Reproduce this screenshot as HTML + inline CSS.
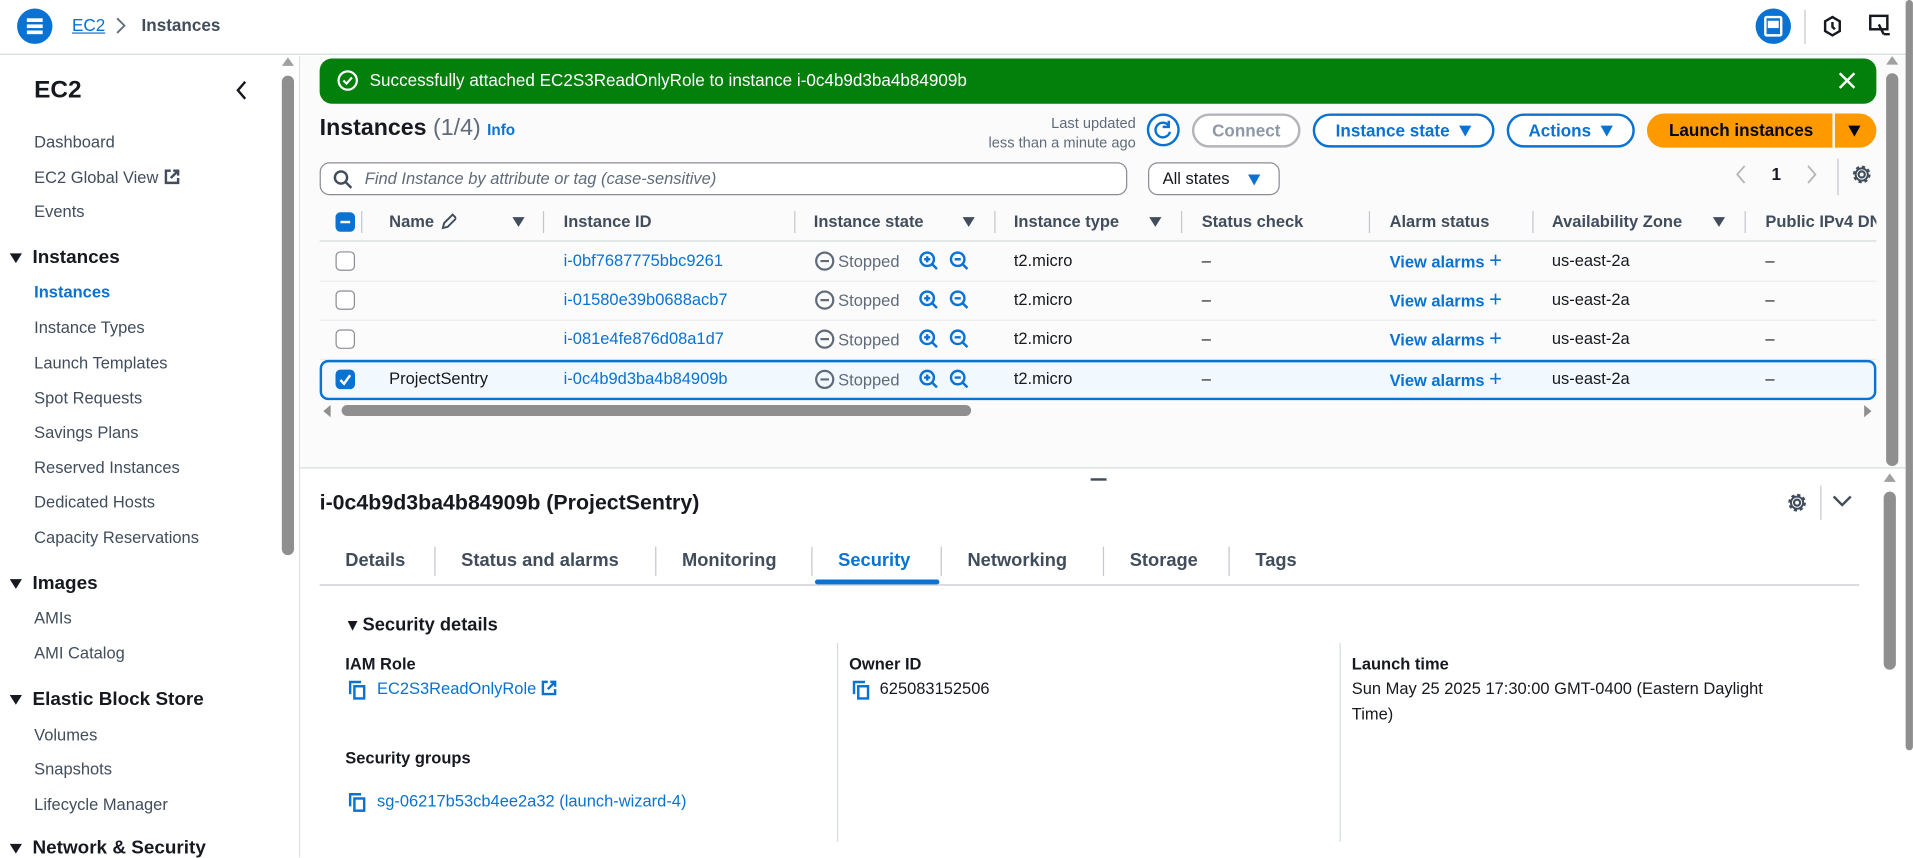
<!DOCTYPE html>
<html><head><meta charset="utf-8"><style>
*{margin:0;padding:0;box-sizing:border-box}
html,body{width:1913px;height:858px;overflow:hidden;background:#fff}
#w{position:absolute;left:0;top:0;width:1568px;height:703px;transform:scale(1.22);transform-origin:0 0;font-family:"Liberation Sans",sans-serif;color:#16191f;font-size:13.5px;background:#fff;overflow:hidden}
.a{position:absolute}
.t{position:absolute;white-space:nowrap;transform:translateY(-50%);line-height:1.2}
.b{font-weight:bold}
.bl{color:#0972d3}
.g{color:#5f6b7a}
.sep{position:absolute;width:1px;background:#c6c6cd}
.cb{position:absolute;width:16px;height:16px;border:1.5px solid #8c8c94;border-radius:4px;background:#fff}
.btn{position:absolute;height:28px;border:2px solid #0972d3;border-radius:16px;color:#0972d3;font-weight:bold;font-size:14px;display:flex;align-items:center;justify-content:center;gap:8px;background:#fff}
.tri{display:inline-block;width:0;height:0;border-left:5px solid transparent;border-right:5px solid transparent;border-top:9px solid currentColor}
.tri2{display:inline-block;width:0;height:0;border-left:5px solid transparent;border-right:5px solid transparent;border-top:8px solid #16191f;vertical-align:middle}
.hdr{font-weight:bold;color:#414d5c}
</style></head><body><div id="w">

<!-- top bar -->
<div class="a" style="left:0;top:0;width:1568px;height:45px;background:#fff;border-bottom:1px solid #d5dbdb"></div>
<div class="a" style="left:14px;top:7px;width:29px;height:29px;border-radius:50%;background:#0972d3"></div>
<div class="a" style="left:22px;top:15px;width:13px;height:2.5px;background:#fff;box-shadow:0 5px 0 #fff,0 10px 0 #fff"></div>
<div class="t bl" style="left:59px;top:21px;font-size:14px;text-decoration:underline">EC2</div>
<svg class="a" style="left:94px;top:14px" width="10" height="14"><path d="M2 1l6 6-6 6" fill="none" stroke="#5f6b7a" stroke-width="1.5"/></svg>
<div class="t b" style="left:116px;top:21px;font-size:14px;color:#414d5c">Instances</div>
<div class="a" style="left:1439px;top:7px;width:29px;height:29px;border-radius:50%;background:#0972d3"></div>
<div class="a" style="left:1446px;top:13px;width:15px;height:17px;border:2px solid #fff;border-radius:2px"></div>
<div class="a" style="left:1449px;top:17px;width:9px;height:6px;background:#fff"></div>
<div class="sep" style="left:1479px;top:8px;height:28px"></div>
<svg class="a" style="left:1493px;top:12px" width="18" height="20"><path d="M9 2l6 3.5v8L9 17l-6-3.5v-8z" fill="none" stroke="#16191f" stroke-width="2"/><path d="M9 6v4l2 2" stroke="#16191f" stroke-width="2" fill="none"/></svg>
<svg class="a" style="left:1531px;top:11px" width="20" height="20"><rect x="2" y="2" width="14" height="11" fill="none" stroke="#16191f" stroke-width="2"/><path d="M9 9l4 8M13 17h5" stroke="#16191f" stroke-width="2"/></svg>

<!-- sidebar -->
<div class="t b" style="left:28px;top:74px;font-size:20px">EC2</div>
<svg class="a" style="left:192px;top:66px" width="12" height="16"><path d="M9 1L3 8l6 7" fill="none" stroke="#16191f" stroke-width="2"/></svg>
<div class="t" style="left:28px;top:117px;color:#414d5c">Dashboard</div>
<div class="t" style="left:28px;top:146px;color:#414d5c">EC2 Global View <svg width="14" height="14" style="vertical-align:-2px"><path d="M6 2H2v10h10V8M8 2h4v4M12 2L6 8" fill="none" stroke="#414d5c" stroke-width="2"/></svg></div>
<div class="t" style="left:28px;top:174px;color:#414d5c">Events</div>
<div class="t b" style="left:8px;top:212px;font-size:15.5px"><span class="tri2"></span>&nbsp; Instances</div>
<div class="t b bl" style="left:28px;top:240px">Instances</div>
<div class="t" style="left:28px;top:269px;color:#414d5c">Instance Types</div>
<div class="t" style="left:28px;top:298px;color:#414d5c">Launch Templates</div>
<div class="t" style="left:28px;top:327px;color:#414d5c">Spot Requests</div>
<div class="t" style="left:28px;top:355px;color:#414d5c">Savings Plans</div>
<div class="t" style="left:28px;top:384px;color:#414d5c">Reserved Instances</div>
<div class="t" style="left:28px;top:412px;color:#414d5c">Dedicated Hosts</div>
<div class="t" style="left:28px;top:441px;color:#414d5c">Capacity Reservations</div>
<div class="t b" style="left:8px;top:479px;font-size:15.5px"><span class="tri2"></span>&nbsp; Images</div>
<div class="t" style="left:28px;top:507px;color:#414d5c">AMIs</div>
<div class="t" style="left:28px;top:536px;color:#414d5c">AMI Catalog</div>
<div class="t b" style="left:8px;top:574px;font-size:15.5px"><span class="tri2"></span>&nbsp; Elastic Block Store</div>
<div class="t" style="left:28px;top:603px;color:#414d5c">Volumes</div>
<div class="t" style="left:28px;top:631px;color:#414d5c">Snapshots</div>
<div class="t" style="left:28px;top:660px;color:#414d5c">Lifecycle Manager</div>
<div class="t b" style="left:8px;top:696px;font-size:15.5px"><span class="tri2"></span>&nbsp; Network &amp; Security</div>
<!-- sidebar scrollbar -->
<div class="a" style="left:229px;top:46px;width:14px;height:657px;background:#fff"></div>
<div class="a" style="left:231px;top:47px;width:0;height:0;border-left:5px solid transparent;border-right:5px solid transparent;border-bottom:7px solid #a0a0a0"></div>
<div class="a" style="left:231px;top:62px;width:10px;height:393px;background:#8f8f8f;border-radius:5px"></div>
<div class="a" style="left:245px;top:46px;width:1px;height:657px;background:#e0e0e0"></div>

<!-- upper main -->
<div class="a" style="left:246px;top:46px;width:1316px;height:337px;background:#fbfbfb"></div>
<div class="a" style="left:262px;top:48px;width:1276px;height:37px;background:#037f0c;border-radius:10px"></div>
<svg class="a" style="left:276px;top:57px" width="18" height="18"><circle cx="9" cy="9" r="7.5" fill="none" stroke="#fff" stroke-width="1.8"/><path d="M5.5 9l2.5 2.5 4.5-5" fill="none" stroke="#fff" stroke-width="1.8"/></svg>
<div class="t" style="left:303px;top:66px;color:#fff;font-size:14px">Successfully attached EC2S3ReadOnlyRole to instance i-0c4b9d3ba4b84909b</div>
<svg class="a" style="left:1507px;top:59px" width="14" height="14"><path d="M1 1l12 12M13 1L1 13" stroke="#fff" stroke-width="2"/></svg>

<div class="t" style="left:262px;top:106px;font-size:19px"><b>Instances</b> <span class="g">(1/4)</span> <span class="bl b" style="font-size:12.5px">Info</span></div>
<div class="t g" style="right:637px;top:101px;font-size:12px;text-align:right">Last updated</div>
<div class="t g" style="right:637px;top:117px;font-size:12px;text-align:right">less than a minute ago</div>
<div class="a" style="left:940px;top:93px;width:27px;height:27px;border:2px solid #0972d3;border-radius:50%;background:#fff"></div>
<svg class="a" style="left:945px;top:98px" width="17" height="17"><path d="M13 5a6 6 0 1 0 1 5" fill="none" stroke="#0972d3" stroke-width="2"/><path d="M13 1v5h-5" fill="none" stroke="#0972d3" stroke-width="2"/></svg>
<div class="btn" style="left:977px;top:93px;width:89px;border-color:#b4b4bb;color:#8d99a8">Connect</div>
<div class="btn" style="left:1076px;top:93px;width:149px">Instance state <span class="tri"></span></div>
<div class="btn" style="left:1235px;top:93px;width:105px">Actions <span class="tri"></span></div>
<div class="a" style="left:1350px;top:93px;width:188px;height:28px;border-radius:16px;background:#ff9900"></div>
<div class="t b" style="left:1368px;top:107px;font-size:14px;color:#000716">Launch instances</div>
<div class="a" style="left:1502px;top:93px;width:2px;height:28px;background:#fbfbfb"></div>
<div class="a" style="left:1515px;top:103px;width:0;height:0;border-left:5px solid transparent;border-right:5px solid transparent;border-top:9px solid #000716"></div>

<div class="a" style="left:262px;top:133px;width:662px;height:27px;border:1px solid #8c8c94;border-radius:8px;background:#fff"></div>
<svg class="a" style="left:273px;top:139px" width="16" height="16"><circle cx="6.5" cy="6.5" r="5" fill="none" stroke="#414d5c" stroke-width="2"/><path d="M10 10l5 5" stroke="#414d5c" stroke-width="2"/></svg>
<div class="t g" style="left:299px;top:147px;font-style:italic">Find Instance by attribute or tag (case-sensitive)</div>
<div class="a" style="left:941px;top:133px;width:108px;height:27px;border:1px solid #8c8c94;border-radius:8px;background:#fff"></div>
<div class="t" style="left:953px;top:147px">All states</div>
<div class="a" style="left:1023px;top:143px;width:0;height:0;border-left:5px solid transparent;border-right:5px solid transparent;border-top:9px solid #0972d3"></div>
<svg class="a" style="left:1422px;top:135px" width="10" height="16"><path d="M8 1L2 8l6 7" fill="none" stroke="#b4b4bb" stroke-width="1.5"/></svg>
<div class="t b" style="left:1452px;top:143px;font-size:14px">1</div>
<svg class="a" style="left:1480px;top:135px" width="10" height="16"><path d="M2 1l6 7-6 7" fill="none" stroke="#b4b4bb" stroke-width="1.5"/></svg>
<div class="sep" style="left:1506px;top:130px;height:30px"></div>
<svg class="a" style="left:1517px;top:134px" width="18" height="18"><circle cx="9" cy="9" r="2.5" fill="none" stroke="#414d5c" stroke-width="1.8"/><circle cx="9" cy="9" r="6" fill="none" stroke="#414d5c" stroke-width="2.5" stroke-dasharray="2.5 2.2"/><circle cx="9" cy="9" r="5" fill="none" stroke="#414d5c" stroke-width="1.6"/></svg>

<!-- table header -->
<div class="a" style="left:275px;top:174px;width:16px;height:16px;background:#0972d3;border-radius:4px"></div>
<div class="a" style="left:279px;top:181px;width:8px;height:2px;background:#fff"></div>
<div class="sep" style="left:296px;top:173px;height:18px"></div>
<div class="t hdr" style="left:319px;top:182px">Name <svg width="14" height="14" style="vertical-align:-2px"><path d="M3 13l1-4 7-7 3 3-7 7z" fill="none" stroke="#414d5c" stroke-width="1.6"/></svg></div>
<div class="a" style="left:420px;top:178px;width:0;height:0;border-left:5px solid transparent;border-right:5px solid transparent;border-top:8px solid #414d5c"></div>
<div class="sep" style="left:445px;top:173px;height:18px"></div>
<div class="t hdr" style="left:462px;top:182px">Instance ID</div>
<div class="sep" style="left:651px;top:173px;height:18px"></div>
<div class="t hdr" style="left:667px;top:182px">Instance state</div>
<div class="a" style="left:789px;top:178px;width:0;height:0;border-left:5px solid transparent;border-right:5px solid transparent;border-top:8px solid #414d5c"></div>
<div class="sep" style="left:815px;top:173px;height:18px"></div>
<div class="t hdr" style="left:831px;top:182px">Instance type</div>
<div class="a" style="left:942px;top:178px;width:0;height:0;border-left:5px solid transparent;border-right:5px solid transparent;border-top:8px solid #414d5c"></div>
<div class="sep" style="left:968px;top:173px;height:18px"></div>
<div class="t hdr" style="left:985px;top:182px">Status check</div>
<div class="sep" style="left:1122px;top:173px;height:18px"></div>
<div class="t hdr" style="left:1139px;top:182px">Alarm status</div>
<div class="sep" style="left:1256px;top:173px;height:18px"></div>
<div class="t hdr" style="left:1272px;top:182px">Availability Zone</div>
<div class="a" style="left:1404px;top:178px;width:0;height:0;border-left:5px solid transparent;border-right:5px solid transparent;border-top:8px solid #414d5c"></div>
<div class="sep" style="left:1430px;top:173px;height:18px"></div>
<div class="t hdr" style="left:1447px;top:182px;width:91px;overflow:hidden;transform:translateY(-50%)">Public IPv4 DNS</div>
<div class="a" style="left:262px;top:197px;width:1276px;height:1px;background:#d5dbdb"></div>
<div class="a" style="left:262px;top:230px;width:1276px;height:1px;background:#e9ebed"></div>
<div class="a" style="left:262px;top:262px;width:1276px;height:1px;background:#e9ebed"></div>
<div class="a" style="left:262px;top:294px;width:1276px;height:1px;background:#e9ebed"></div>
<div class="a" style="left:262px;top:295px;width:1276px;height:33px;border:2px solid #0972d3;border-radius:7px;background:#f1f8fe"></div>

<!-- rows -->
<div class="cb" style="left:275px;top:206px"></div>
<div class="cb" style="left:275px;top:238px"></div>
<div class="cb" style="left:275px;top:270px"></div>
<div class="a" style="left:275px;top:303px;width:16px;height:16px;background:#0972d3;border-radius:4px"></div>
<svg class="a" style="left:277px;top:305px" width="12" height="12"><path d="M2 6.5l3 3 5-7" fill="none" stroke="#fff" stroke-width="2"/></svg>
<div class="t" style="left:319px;top:311px">ProjectSentry</div>

<div class="t bl" style="left:462px;top:214px">i-0bf7687775bbc9261</div>
<div class="t bl" style="left:462px;top:246px">i-01580e39b0688acb7</div>
<div class="t bl" style="left:462px;top:278px">i-081e4fe876d08a1d7</div>
<div class="t bl" style="left:462px;top:311px">i-0c4b9d3ba4b84909b</div>

<!-- state cells (repeated) -->
<div class="a" style="left:667px;top:205px;width:160px;height:120px">
 <div class="a" style="top:0"><svg width="130" height="18"><circle cx="9" cy="9" r="7" fill="none" stroke="#5f6b7a" stroke-width="1.8"/><path d="M5.5 9h7" stroke="#5f6b7a" stroke-width="1.8"/><text x="20" y="14" font-family="Liberation Sans" font-size="13.5" fill="#5f6b7a">Stopped</text><circle cx="93" cy="7.5" r="5.5" fill="none" stroke="#0972d3" stroke-width="2"/><path d="M97 11.5l4 4M90.5 7.5h5M93 5v5" stroke="#0972d3" stroke-width="2"/><circle cx="118" cy="7.5" r="5.5" fill="none" stroke="#0972d3" stroke-width="2"/><path d="M122 11.5l4 4M115.5 7.5h5" stroke="#0972d3" stroke-width="2"/></svg></div>
 <div class="a" style="top:32px"><svg width="130" height="18"><circle cx="9" cy="9" r="7" fill="none" stroke="#5f6b7a" stroke-width="1.8"/><path d="M5.5 9h7" stroke="#5f6b7a" stroke-width="1.8"/><text x="20" y="14" font-family="Liberation Sans" font-size="13.5" fill="#5f6b7a">Stopped</text><circle cx="93" cy="7.5" r="5.5" fill="none" stroke="#0972d3" stroke-width="2"/><path d="M97 11.5l4 4M90.5 7.5h5M93 5v5" stroke="#0972d3" stroke-width="2"/><circle cx="118" cy="7.5" r="5.5" fill="none" stroke="#0972d3" stroke-width="2"/><path d="M122 11.5l4 4M115.5 7.5h5" stroke="#0972d3" stroke-width="2"/></svg></div>
 <div class="a" style="top:64px"><svg width="130" height="18"><circle cx="9" cy="9" r="7" fill="none" stroke="#5f6b7a" stroke-width="1.8"/><path d="M5.5 9h7" stroke="#5f6b7a" stroke-width="1.8"/><text x="20" y="14" font-family="Liberation Sans" font-size="13.5" fill="#5f6b7a">Stopped</text><circle cx="93" cy="7.5" r="5.5" fill="none" stroke="#0972d3" stroke-width="2"/><path d="M97 11.5l4 4M90.5 7.5h5M93 5v5" stroke="#0972d3" stroke-width="2"/><circle cx="118" cy="7.5" r="5.5" fill="none" stroke="#0972d3" stroke-width="2"/><path d="M122 11.5l4 4M115.5 7.5h5" stroke="#0972d3" stroke-width="2"/></svg></div>
 <div class="a" style="top:97px"><svg width="130" height="18"><circle cx="9" cy="9" r="7" fill="none" stroke="#5f6b7a" stroke-width="1.8"/><path d="M5.5 9h7" stroke="#5f6b7a" stroke-width="1.8"/><text x="20" y="14" font-family="Liberation Sans" font-size="13.5" fill="#5f6b7a">Stopped</text><circle cx="93" cy="7.5" r="5.5" fill="none" stroke="#0972d3" stroke-width="2"/><path d="M97 11.5l4 4M90.5 7.5h5M93 5v5" stroke="#0972d3" stroke-width="2"/><circle cx="118" cy="7.5" r="5.5" fill="none" stroke="#0972d3" stroke-width="2"/><path d="M122 11.5l4 4M115.5 7.5h5" stroke="#0972d3" stroke-width="2"/></svg></div>
</div>

<div class="t" style="left:831px;top:214px">t2.micro</div>
<div class="t" style="left:831px;top:246px">t2.micro</div>
<div class="t" style="left:831px;top:278px">t2.micro</div>
<div class="t" style="left:831px;top:311px">t2.micro</div>
<div class="t" style="left:985px;top:214px">–</div>
<div class="t" style="left:985px;top:246px">–</div>
<div class="t" style="left:985px;top:278px">–</div>
<div class="t" style="left:985px;top:311px">–</div>
<div class="t bl b" style="left:1139px;top:214px">View alarms <span style="font-size:18px;font-weight:normal">+</span></div>
<div class="t bl b" style="left:1139px;top:246px">View alarms <span style="font-size:18px;font-weight:normal">+</span></div>
<div class="t bl b" style="left:1139px;top:278px">View alarms <span style="font-size:18px;font-weight:normal">+</span></div>
<div class="t bl b" style="left:1139px;top:311px">View alarms <span style="font-size:18px;font-weight:normal">+</span></div>
<div class="t" style="left:1272px;top:214px">us-east-2a</div>
<div class="t" style="left:1272px;top:246px">us-east-2a</div>
<div class="t" style="left:1272px;top:278px">us-east-2a</div>
<div class="t" style="left:1272px;top:311px">us-east-2a</div>
<div class="t" style="left:1447px;top:214px">–</div>
<div class="t" style="left:1447px;top:246px">–</div>
<div class="t" style="left:1447px;top:278px">–</div>
<div class="t" style="left:1447px;top:311px">–</div>

<!-- h scrollbar -->
<div class="a" style="left:265px;top:332px;width:0;height:0;border-top:5px solid transparent;border-bottom:5px solid transparent;border-right:6px solid #8f8f8f"></div>
<div class="a" style="left:280px;top:332px;width:516px;height:9px;background:#8f8f8f;border-radius:5px"></div>
<div class="a" style="left:1528px;top:332px;width:0;height:0;border-top:5px solid transparent;border-bottom:5px solid transparent;border-left:6px solid #8f8f8f"></div>
<!-- right scroll upper -->
<div class="a" style="left:1546px;top:46px;width:0;height:0;border-left:5px solid transparent;border-right:5px solid transparent;border-bottom:7px solid #a0a0a0"></div>
<div class="a" style="left:1546px;top:60px;width:10px;height:322px;background:#8f8f8f;border-radius:5px"></div>

<!-- divider -->
<div class="a" style="left:246px;top:383px;width:1316px;height:1px;background:#d5dbdb"></div>
<div class="a" style="left:894px;top:392px;width:13px;height:2px;background:#414d5c"></div>

<!-- lower panel -->
<div class="t b" style="left:262px;top:412px;font-size:17.5px">i-0c4b9d3ba4b84909b (ProjectSentry)</div>
<svg class="a" style="left:1464px;top:403px" width="18" height="18"><circle cx="9" cy="9" r="2.5" fill="none" stroke="#414d5c" stroke-width="1.8"/><circle cx="9" cy="9" r="6" fill="none" stroke="#414d5c" stroke-width="2.5" stroke-dasharray="2.5 2.2"/><circle cx="9" cy="9" r="5" fill="none" stroke="#414d5c" stroke-width="1.6"/></svg>
<div class="sep" style="left:1492px;top:398px;height:28px"></div>
<svg class="a" style="left:1502px;top:406px" width="16" height="10"><path d="M1 1l7 7 7-7" fill="none" stroke="#414d5c" stroke-width="2"/></svg>
<div class="a" style="left:1544px;top:388px;width:0;height:0;border-left:5px solid transparent;border-right:5px solid transparent;border-bottom:7px solid #a0a0a0"></div>
<div class="a" style="left:1544px;top:403px;width:10px;height:146px;background:#8f8f8f;border-radius:5px"></div>
<div class="a" style="left:1562px;top:0;width:6px;height:615px;background:#8f8f8f;border-radius:3px"></div>

<div class="t b" style="left:283px;top:460px;font-size:15px;color:#414d5c">Details</div>
<div class="sep" style="left:356px;top:448px;height:24px"></div>
<div class="t b" style="left:378px;top:460px;font-size:15px;color:#414d5c">Status and alarms</div>
<div class="sep" style="left:537px;top:448px;height:24px"></div>
<div class="t b" style="left:559px;top:460px;font-size:15px;color:#414d5c">Monitoring</div>
<div class="sep" style="left:665px;top:448px;height:24px"></div>
<div class="t b bl" style="left:687px;top:460px;font-size:15px">Security</div>
<div class="sep" style="left:771px;top:448px;height:24px"></div>
<div class="t b" style="left:793px;top:460px;font-size:15px;color:#414d5c">Networking</div>
<div class="sep" style="left:904px;top:448px;height:24px"></div>
<div class="t b" style="left:926px;top:460px;font-size:15px;color:#414d5c">Storage</div>
<div class="sep" style="left:1007px;top:448px;height:24px"></div>
<div class="t b" style="left:1029px;top:460px;font-size:15px;color:#414d5c">Tags</div>
<div class="a" style="left:262px;top:479px;width:1262px;height:1px;background:#c6c6cd"></div>
<div class="a" style="left:668px;top:475px;width:102px;height:4px;background:#0972d3;border-radius:2px"></div>

<div class="t b" style="left:285px;top:513px;font-size:15px"><span class="tri2" style="border-left-width:4px;border-right-width:4px;border-top-width:8px"></span>&nbsp;Security details</div>
<div class="sep" style="left:686px;top:527px;height:163px;background:#d5dbdb"></div>
<div class="sep" style="left:1098px;top:527px;height:163px;background:#d5dbdb"></div>

<div class="t b" style="left:283px;top:545px">IAM Role</div>
<svg class="a" style="left:285px;top:557px" width="16" height="17"><path d="M2 12V2h9" fill="none" stroke="#0972d3" stroke-width="2"/><rect x="5.5" y="5.5" width="8" height="10" fill="none" stroke="#0972d3" stroke-width="2"/></svg>
<div class="t bl" style="left:309px;top:565px">EC2S3ReadOnlyRole <svg width="14" height="14" style="vertical-align:-2px"><path d="M6 2H2v10h10V8M8 2h4v4M12 2L6 8" fill="none" stroke="#0972d3" stroke-width="2"/></svg></div>
<div class="t b" style="left:283px;top:622px">Security groups</div>
<svg class="a" style="left:285px;top:649px" width="16" height="17"><path d="M2 12V2h9" fill="none" stroke="#0972d3" stroke-width="2"/><rect x="5.5" y="5.5" width="8" height="10" fill="none" stroke="#0972d3" stroke-width="2"/></svg>
<div class="t bl" style="left:309px;top:657px">sg-06217b53cb4ee2a32 (launch-wizard-4)</div>

<div class="t b" style="left:696px;top:545px">Owner ID</div>
<svg class="a" style="left:698px;top:557px" width="16" height="17"><path d="M2 12V2h9" fill="none" stroke="#0972d3" stroke-width="2"/><rect x="5.5" y="5.5" width="8" height="10" fill="none" stroke="#0972d3" stroke-width="2"/></svg>
<div class="t" style="left:721px;top:565px">625083152506</div>

<div class="t b" style="left:1108px;top:545px">Launch time</div>
<div class="t" style="left:1108px;top:565px">Sun May 25 2025 17:30:00 GMT-0400 (Eastern Daylight</div>
<div class="t" style="left:1108px;top:586px">Time)</div>

</div></body></html>
